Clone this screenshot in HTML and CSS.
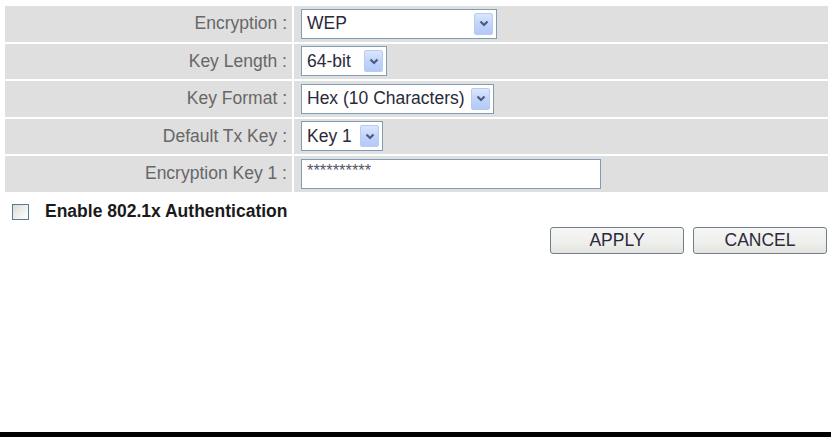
FILE: index.html
```html
<!DOCTYPE html>
<html>
<head>
<meta charset="utf-8">
<link rel="stylesheet" href="styles.css">
</head>
<body>
<div class="page">
  <table class="form">
    <tr>
      <td class="label">Encryption :</td>
      <td class="value">
        <div class="select w-enc"><span class="sel-text">WEP</span><span class="arrow"><svg width="10" height="7" viewBox="0 0 10 7"><path d="M1.5 1.5 L5 5 L8.5 1.5" fill="none" stroke="#4a5d80" stroke-width="2.2"/></svg></span></div>
      </td>
    </tr>
    <tr>
      <td class="label">Key Length :</td>
      <td class="value">
        <div class="select w-len"><span class="sel-text">64-bit</span><span class="arrow"><svg width="10" height="7" viewBox="0 0 10 7"><path d="M1.5 1.5 L5 5 L8.5 1.5" fill="none" stroke="#4a5d80" stroke-width="2.2"/></svg></span></div>
      </td>
    </tr>
    <tr>
      <td class="label">Key Format :</td>
      <td class="value">
        <div class="select w-fmt"><span class="sel-text">Hex (10 Characters)</span><span class="arrow"><svg width="10" height="7" viewBox="0 0 10 7"><path d="M1.5 1.5 L5 5 L8.5 1.5" fill="none" stroke="#4a5d80" stroke-width="2.2"/></svg></span></div>
      </td>
    </tr>
    <tr>
      <td class="label">Default Tx Key :</td>
      <td class="value">
        <div class="select w-key"><span class="sel-text">Key 1</span><span class="arrow"><svg width="10" height="7" viewBox="0 0 10 7"><path d="M1.5 1.5 L5 5 L8.5 1.5" fill="none" stroke="#4a5d80" stroke-width="2.2"/></svg></span></div>
      </td>
    </tr>
    <tr>
      <td class="label">Encryption Key 1 :</td>
      <td class="value">
        <input class="textbox" type="text" value="**********">
      </td>
    </tr>
  </table>

  <div class="auth">
    <span class="checkbox"></span>
    <span class="auth-label">Enable 802.1x Authentication</span>
  </div>

  <div class="actions">
    <button class="btn">APPLY</button>
    <button class="btn">CANCEL</button>
  </div>
</div>
<div class="bottom-bar"></div>
</body>
</html>
```

FILE: styles.css
```css
html, body {
  margin: 0;
  padding: 0;
  background: #ffffff;
}

body {
  height: 437px;
  display: flex;
  flex-direction: column;
  font-family: "Liberation Sans", Arial, sans-serif;
  overflow: hidden;
}

.page {
  padding: 4px 1px 0 3px;
  flex: 1;
}

.form {
  width: 827px;
  border-spacing: 2px;
  border-collapse: separate;
}

.form td {
  background: #dfdfdf;
  height: 35.5px;
  padding: 0;
  vertical-align: middle;
}

.label {
  width: 282px;
  padding-right: 5px !important;
  text-align: right;
  font-size: 17.5px;
  color: #676767;
}

.value {
  padding-left: 7px !important;
}

.select {
  box-sizing: border-box;
  height: 30px;
  border: 1px solid #7f9db9;
  background: #ffffff;
  display: flex;
  align-items: center;
  justify-content: space-between;
  padding: 0 3px 0 5px;
}

.w-enc { width: 196px; }
.w-len { width: 86px; }
.w-fmt { width: 193px; }
.w-key { width: 82px; }

.sel-text {
  font-size: 17.5px;
  color: #2a2a3a;
  white-space: nowrap;
}

.arrow {
  box-sizing: border-box;
  width: 19px;
  height: 22px;
  border: 1px solid #b9cbf1;
  border-radius: 2px;
  background: linear-gradient(to bottom, #dbe6fd 0%, #c2d4fb 50%, #b3c9f8 100%);
  display: flex;
  align-items: center;
  justify-content: center;
  flex: none;
}

.textbox {
  box-sizing: border-box;
  width: 300px;
  height: 30px;
  border: 1px solid #7f9db9;
  background: #ffffff;
  padding: 0 0 6px 5px;
  margin: 0;
  font-family: "Liberation Sans", Arial, sans-serif;
  font-size: 16.5px;
  color: #555566;
  line-height: 28px;
  display: block;
}

.auth {
  display: flex;
  align-items: center;
  margin-top: 8px;
  padding-left: 9px;
  height: 20px;
}

.checkbox {
  box-sizing: border-box;
  width: 17px;
  height: 16px;
  border: 1px solid #5b7a98;
  background: linear-gradient(135deg, #dcdcd7 0%, #f5f5f2 70%, #ffffff 100%);
  margin-right: 16px;
}

.auth-label {
  font-size: 17.5px;
  font-weight: bold;
  color: #1a1a1a;
}

.actions {
  display: flex;
  justify-content: flex-end;
  gap: 9px;
  margin-top: 5px;
  width: 824px;
}

.btn {
  box-sizing: border-box;
  width: 134px;
  height: 27px;
  border: 1px solid #6f7d8c;
  border-radius: 3px;
  background: linear-gradient(to bottom, #f6f6f4 0%, #eeeeec 60%, #e3e3e0 100%);
  font-family: "Liberation Sans", Arial, sans-serif;
  font-size: 17.5px;
  color: #2a2a3a;
  padding: 0;
  margin: 0;
}

.bottom-bar {
  height: 5px;
  background: #000000;
  flex: none;
}
```
